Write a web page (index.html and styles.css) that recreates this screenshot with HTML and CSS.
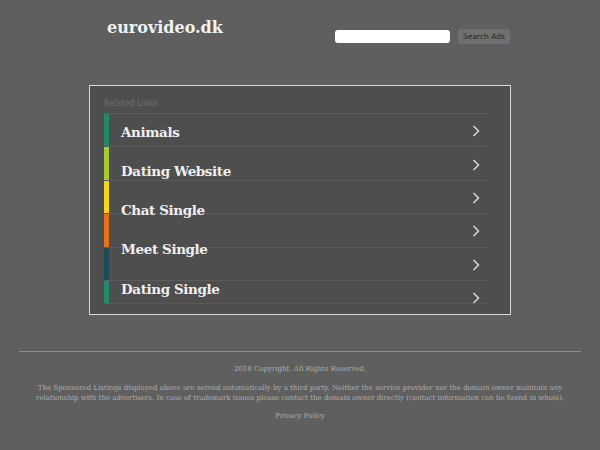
FILE: index.html
```html
<!DOCTYPE html>
<html lang="en">
<head>
<meta charset="utf-8">
<title>eurovideo.dk</title>
<link rel="stylesheet" href="styles.css">
</head>
<body>
<header class="header">
  <h1 class="site-title">eurovideo.dk</h1>
  <form class="search">
    <input class="search-input" type="text" aria-label="Search">
    <button class="search-btn" type="button">Search Ads</button>
  </form>
</header>

<section class="box">
  <div class="related-title">Related Links</div>
  <div class="links">
    <div class="decor">
      <div class="row"><span class="bar c1"></span><svg class="chev" viewBox="0 0 8 12" width="8" height="12"><polyline points="1.5,1 6.5,6 1.5,11"/></svg></div>
      <div class="row"><span class="bar c2"></span><svg class="chev" viewBox="0 0 8 12" width="8" height="12"><polyline points="1.5,1 6.5,6 1.5,11"/></svg></div>
      <div class="row"><span class="bar c3"></span><svg class="chev" viewBox="0 0 8 12" width="8" height="12"><polyline points="1.5,1 6.5,6 1.5,11"/></svg></div>
      <div class="row"><span class="bar c4"></span><svg class="chev" viewBox="0 0 8 12" width="8" height="12"><polyline points="1.5,1 6.5,6 1.5,11"/></svg></div>
      <div class="row"><span class="bar c5"></span><svg class="chev" viewBox="0 0 8 12" width="8" height="12"><polyline points="1.5,1 6.5,6 1.5,11"/></svg></div>
      <div class="row row-last"><span class="bar c6"></span><svg class="chev" viewBox="0 0 8 12" width="8" height="12"><polyline points="1.5,1 6.5,6 1.5,11"/></svg></div>
    </div>
    <ul class="labels">
      <li><a href="#">Animals</a></li>
      <li><a href="#">Dating Website</a></li>
      <li><a href="#">Chat Single</a></li>
      <li><a href="#">Meet Single</a></li>
      <li><a href="#">Dating Single</a></li>
    </ul>
  </div>
</section>

<footer class="footer">
  <p class="copy">2018 Copyright. All Rights Reserved.</p>
  <p class="disclaimer">The Sponsored Listings displayed above are served automatically by a third party. Neither the service provider nor the domain owner maintain any relationship with the advertisers. In case of trademark issues please contact the domain owner directly (contact information can be found in whois).</p>
  <p class="privacy"><a href="#">Privacy Policy</a></p>
</footer>
</body>
</html>
```

FILE: styles.css
```css
html, body {
  margin: 0;
  padding: 0;
}
body {
  background: #5f5f5f;
  font-family: "DejaVu Serif", serif;
  width: 600px;
  height: 450px;
  overflow: hidden;
}

.header {
  width: 422px;
  margin: 0 auto;
  padding: 18px 0 0 18px;
  box-sizing: border-box;
  display: flex;
  justify-content: space-between;
  align-items: flex-start;
}
.site-title {
  margin: 0;
  font-family: "DejaVu Serif", serif;
  font-weight: bold;
  font-size: 16px;
  line-height: 20px;
  color: #f2f2f2;
}
.search {
  margin: 11px 1px 0 0;
  display: flex;
  align-items: center;
  gap: 8px;
}
.search-input {
  width: 115px;
  height: 13px;
  margin: 0;
  padding: 0;
  border: none;
  border-radius: 3px;
  background: #ffffff;
}
.search-btn {
  width: 52px;
  height: 15px;
  margin: 0;
  padding: 0;
  border: none;
  border-radius: 3px;
  background: #707070;
  color: #262626;
  font-family: "DejaVu Sans", sans-serif;
  font-size: 7.5px;
  line-height: 15px;
}

.box {
  width: 422px;
  margin: 41px auto 0;
  box-sizing: border-box;
  border: 1px solid #d8d8d8;
  background: #4e4e4e;
  padding: 12px 22px 1px 14px;
}
.related-title {
  font-family: "DejaVu Sans", sans-serif;
  font-size: 8px;
  line-height: 11px;
  color: #707070;
  margin-bottom: 4px;
}
.links {
  display: grid;
}
.decor, .labels {
  grid-area: 1 / 1;
}
.decor {
  display: flex;
  flex-direction: column;
}
.row {
  height: 33.4px;
  box-sizing: border-box;
  border-top: 1px solid #5b5b5b;
  display: flex;
  align-items: center;
  justify-content: space-between;
}
.bar {
  width: 5px;
  align-self: stretch;
}
.row-last {
  align-items: flex-start;
  background: linear-gradient(to bottom, transparent 22px, #585858 22px, #585858 23px, transparent 23px);
}
.row-last .bar {
  align-self: flex-start;
  height: 22px;
}
.row-last .chev {
  margin-top: 11px;
}
.c1 { background: #1f8a68; }
.c2 { background: #a9c934; }
.c3 { background: #f3d41a; }
.c4 { background: #e5721a; }
.c5 { background: #1b4a5a; }
.c6 { background: #1f8a6c; }
.chev {
  margin-right: 8px;
  margin-top: 2px;
  fill: none;
  stroke: #dedede;
  stroke-width: 1.4;
}
.labels {
  list-style: none;
  margin: -1.5px 0 0;
  padding: 0;
}
.labels li {
  line-height: 39.3px;
  height: 39.3px;
  padding-left: 17px;
}
.labels a {
  font-family: "DejaVu Serif", serif;
  font-weight: bold;
  font-size: 13.5px;
  letter-spacing: -0.4px;
  color: #f0f0f0;
  text-decoration: none;
}

.footer {
  width: 562px;
  margin: 36px auto 0;
  border-top: 1px solid #8e8e8e;
  text-align: center;
  color: #b0b0b0;
  font-family: "DejaVu Serif", serif;
  font-size: 7px;
  line-height: 10px;
}
.footer p {
  margin: 0;
}
.copy {
  padding-top: 12px;
}
.disclaimer {
  padding: 9px 12px 0;
}
.privacy {
  padding-top: 8px;
}
.privacy a {
  color: #b0b0b0;
  text-decoration: none;
}
```
